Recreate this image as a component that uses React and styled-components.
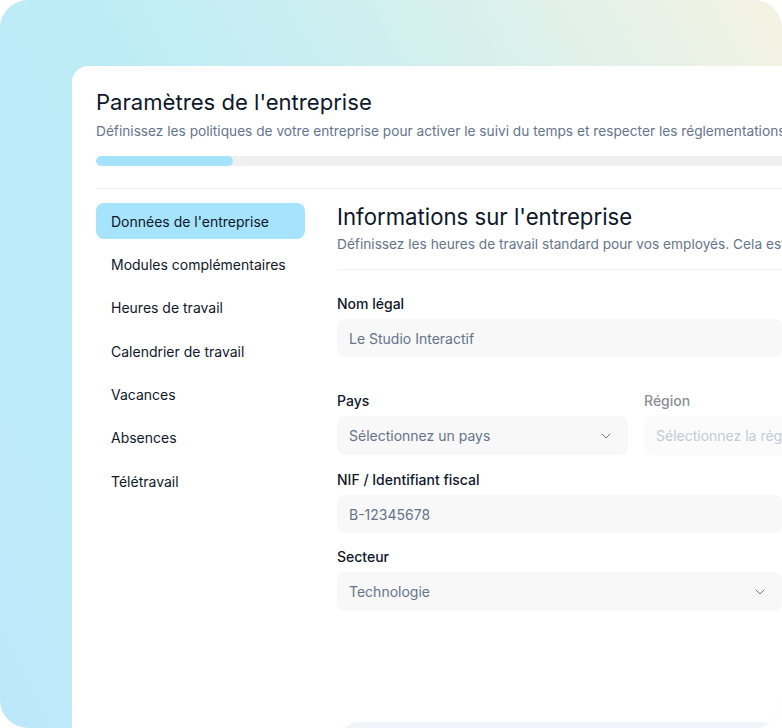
import styled, { createGlobalStyle } from 'styled-components';
import { ChevronDown } from 'lucide-react';

const GlobalStyle = createGlobalStyle`
    * { box-sizing: border-box; }
    body {
        margin: 0;
        background: #ffffff;
        font-family: Inter, "Noto Sans", sans-serif;
        -webkit-font-smoothing: antialiased;
    }
`;

const menu = [
    'Données de l\'entreprise',
    'Modules complémentaires',
    'Heures de travail',
    'Calendrier de travail',
    'Vacances',
    'Absences',
    'Télétravail',
];

const App = () => {
    return (
        <>
            <GlobalStyle />
            <Frame>
                <Panel>
                    <Title>Paramètres de l'entreprise</Title>
                    <Subtitle>
                        Définissez les politiques de votre entreprise pour activer le suivi du temps et respecter les réglementations
                    </Subtitle>
                    <Progress>
                        <ProgressFill style={{ width: '137px' }} />
                    </Progress>
                    <Divider />
                    <Body>
                        <Sidebar>
                            {menu.map((item, i) => (
                                <NavItem key={item} $active={i === 0}>{item}</NavItem>
                            ))}
                        </Sidebar>
                        <Content>
                            <SectionTitle>Informations sur l'entreprise</SectionTitle>
                            <SectionText>
                                Définissez les heures de travail standard pour vos employés. Cela est
                            </SectionText>
                            <SectionDivider />
                            <Field $first $spaced>
                                <Label>Nom légal</Label>
                                <Input>Le Studio Interactif</Input>
                            </Field>
                            <Row>
                                <Field>
                                    <Label>Pays</Label>
                                    <Input $select>
                                        Sélectionnez un pays
                                        <ChevronDown size={16} strokeWidth={1.5} />
                                    </Input>
                                </Field>
                                <Field>
                                    <Label $disabled>Région</Label>
                                    <Input $select $disabled>
                                        Sélectionnez la région
                                        <ChevronDown size={16} strokeWidth={1.5} />
                                    </Input>
                                </Field>
                            </Row>
                            <Field>
                                <Label>NIF / Identifiant fiscal</Label>
                                <Input>B-12345678</Input>
                            </Field>
                            <Field $tight>
                                <Label>Secteur</Label>
                                <Input $select>
                                    Technologie
                                    <ChevronDown size={16} strokeWidth={1.5} />
                                </Input>
                            </Field>
                            <Footer />
                        </Content>
                    </Body>
                </Panel>
            </Frame>
        </>
    );
};

const Frame = styled.div`
    width: 782px;
    height: 728px;
    overflow: hidden;
    border-radius: 28px;
    padding: 66px 0 0 72px;
    background: linear-gradient(62deg, #bde8fa 0%, #bdecf6 40%, #cdeff0 62%, #f5f3e2 100%);
`;

const Panel = styled.div`
    width: 940px;
    height: 720px;
    background: #ffffff;
    border-radius: 16px 0 0 0;
    padding: 20px 24px;
`;

const Title = styled.h1`
    margin: 0;
    font-size: 22.1px;
    line-height: 32px;
    font-weight: 400;
    color: #0f172a;
`;

const Subtitle = styled.p`
    margin: 3px 0 0;
    font-size: 13.7px;
    line-height: 20px;
    color: #66758c;
    white-space: nowrap;
`;

const Progress = styled.div`
    margin-top: 15px;
    height: 10px;
    border-radius: 5px;
    background: #f0f0f0;
    overflow: hidden;
`;

const ProgressFill = styled.div`
    height: 100%;
    border-radius: 5px;
    background: #a5e3fc;
`;

const Divider = styled.div`
    margin-top: 22px;
    height: 1px;
    background: #f3f4f6;
`;

const Body = styled.div`
    display: grid;
    grid-template-columns: 209px 445px;
    column-gap: 32px;
    padding-top: 14px;
`;

const Sidebar = styled.nav`
    display: flex;
    flex-direction: column;
    gap: 7.4px;
`;

const NavItem = styled.div`
    height: 36px;
    display: flex;
    align-items: center;
    padding: 0 15px;
    border-radius: 8px;
    font-size: 14px;
    font-weight: 400;
    color: #0f172a;
    background: ${props => props.$active ? '#a6e3fd' : 'transparent'};
`;

const Content = styled.div`
    display: flex;
    flex-direction: column;
`;

const SectionTitle = styled.h2`
    margin: 0;
    font-size: 22.2px;
    line-height: 28px;
    font-weight: 400;
    color: #0f172a;
`;

const SectionText = styled.p`
    margin: 3px 0 0;
    font-size: 13.7px;
    line-height: 20px;
    color: #66758c;
    white-space: nowrap;
`;

const SectionDivider = styled.div`
    margin-top: 15px;
    height: 1px;
    background: #f3f4f6;
`;

const Field = styled.div`
    display: flex;
    flex-direction: column;
    margin-top: ${props => props.$first ? '24px' : props.$tight ? '14px' : '15px'};
    margin-bottom: ${props => props.$spaced ? '19px' : '0'};
`;

const Row = styled.div`
    display: grid;
    grid-template-columns: 291px 291px;
    column-gap: 16px;
    width: 445px;
`;

const Label = styled.label`
    font-size: 14px;
    line-height: 20px;
    font-weight: 500;
    color: ${props => props.$disabled ? '#8b8f97' : '#0f172a'};
    margin-bottom: 5px;
`;

const Input = styled.div`
    height: ${props => props.$select ? '39px' : '38px'};
    display: flex;
    align-items: center;
    justify-content: space-between;
    padding: 0 14px 0 12px;
    border-radius: 8px;
    background: ${props => props.$disabled ? '#fbfbfb' : '#f8f8f8'};
    font-size: 14px;
    color: ${props => props.$disabled ? '#c4cad3' : '#64748b'};
    white-space: nowrap;
    overflow: hidden;
    svg {
        flex-shrink: 0;
        color: #64748b;
    }
`;

const Footer = styled.div`
    margin: 111px 0 0 5px;
    width: 435px;
    height: 60px;
    border-radius: 16px;
    background: #f1f5f9;
`;

export default App;
